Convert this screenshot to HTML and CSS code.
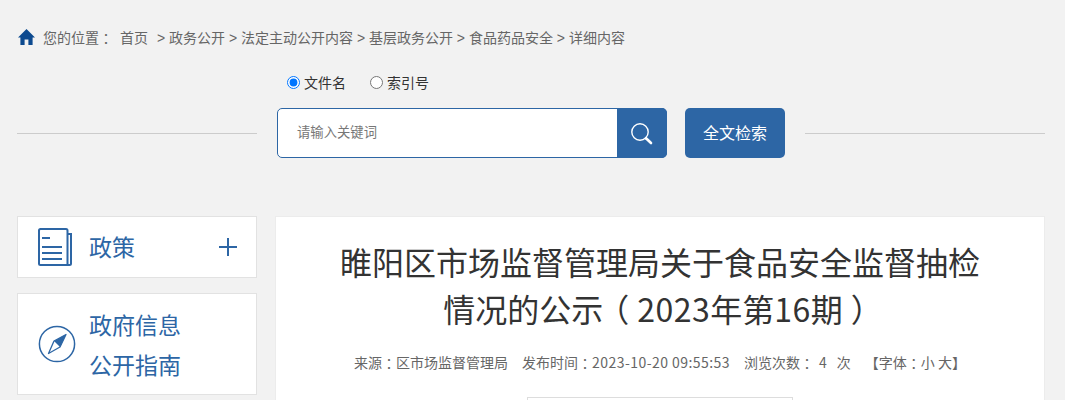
FILE: index.html
```html
<!DOCTYPE html>
<html lang="zh-CN">
<head>
<meta charset="utf-8">
<title>详细内容</title>
<link rel="stylesheet" href="styles.css">
</head>
<body>
<div class="page">
  <nav class="crumb">
    <svg class="home" viewBox="0 0 17 16" width="17" height="16"><path d="M8.5 0 L17 8.4 L14.6 8.4 L14.6 16 L10.4 16 L10.4 10.6 L6.6 10.6 L6.6 16 L2.4 16 L2.4 8.4 L0 8.4 Z" fill="#0d4a8f"/></svg>
    <span class="where">您的位置<span class="pun">：</span></span>
    <span class="first">首页</span>
    <span class="trail">&gt; 政务公开 &gt; 法定主动公开内容 &gt; 基层政务公开 &gt; 食品药品安全 &gt; 详细内容</span>
  </nav>
  <div class="radios">
    <label class="radio"><input type="radio" name="k" checked>文件名</label>
    <label class="radio"><input type="radio" name="k">索引号</label>
  </div>
  <div class="search">
    <div class="rule"></div>
    <div class="field">
      <span class="placeholder">请输入关键词</span>
      <button class="go" aria-label="搜索">
        <svg viewBox="0 0 22 22" width="22" height="22" fill="none" stroke="#fff"><circle cx="9" cy="9" r="8.2" stroke-width="1.4"/><path d="M15 15.2 L20 20" stroke-width="2.6" stroke-linecap="round"/></svg>
      </button>
    </div>
    <button class="full">全文检索</button>
    <div class="rule"></div>
  </div>
  <div class="columns">
    <aside class="side">
      <div class="card policy">
        <svg class="doc" viewBox="0 0 34 38" width="34" height="38" fill="none" stroke="#2d66a5" stroke-width="2"><path d="M2.5 1 H28 Q29.500 1 29.500 2.500 V37 H2.500 Q1 37 1 35.500 V2.500 Q1 1 2.500 1 Z"/><path d="M29.500 6 H33 V35.500 Q33 37 31.500 37 H29.500"/><path d="M4 10 H12 M4 19 H24 M4 25 H24 M4 31 H24"/></svg>
        <span class="label">政策</span>
        <svg class="plus" viewBox="0 0 18 18" width="18" height="18" stroke="#2d66a5" stroke-width="2"><path d="M0 9 H18 M9 0 V18"/></svg>
      </div>
      <div class="card guide">
        <svg class="compass" viewBox="0 0 38 38" width="38" height="38"><circle cx="19" cy="19" r="17.6" fill="none" stroke="#2d66a5" stroke-width="1.5"/><path d="M28 9.500 L22 22 L16 16 Z" fill="#2d66a5"/><path d="M28 9.500 L22 22 L10.500 28.500 L16 16 Z" fill="none" stroke="#2d66a5" stroke-width="1.300" stroke-linejoin="round"/></svg>
        <span class="label two">政府信息<br>公开指南</span>
      </div>
    </aside>
    <main class="article">
      <h1 class="title">睢阳区市场监督管理局关于食品安全监督抽检<br>情况的公示<span class="pun">（</span><span class="digits">2023</span>年第<span class="digits">16</span>期<span class="pun">）</span></h1>
      <p class="meta">
        <span>来源<span class="pun">：</span>区市场监督管理局</span>
        <span>发布时间<span class="pun">：</span><span class="num">2023-10-20 09:55:53</span></span>
        <span>浏览次数<span class="pun">：</span><span class="count">4</span>次</span>
        <span>【字体<span class="pun">：</span>小 大】</span>
      </p>
      <div class="box"></div>
    </main>
  </div>
</div>
</body>
</html>
```
FILE: styles.css
```css
* { box-sizing: border-box; }
html, body { margin: 0; height: 400px; overflow: hidden; }
body {
  background: #f2f2f2;
  font-family: "Noto Sans CJK SC", "Open Sans", sans-serif;
  color: #333;
}
.page { width: 1028px; margin-left: 17px; height: 400px; overflow: hidden; }
.pun {
  display: inline-block;
  width: 1em;
  text-align: center;
  font-feature-settings: "palt";
}

.crumb {
  display: flex;
  align-items: center;
  height: 20px;
  margin-top: 28px;
  margin-left: 1px;
  font-size: 14px;
  line-height: 20px;
  color: #666;
  font-family: "Liberation Sans", "Noto Sans CJK SC", sans-serif;
}
.home { margin-right: 8px; margin-top: -2px; }
.where { margin-right: 7px; }
.first { margin-right: 9px; }

.radios {
  display: flex;
  gap: 24px;
  margin: 24px 0 0 270px;
  height: 20px;
  align-items: center;
  font-size: 14px;
  color: #333;
}
.radio { display: flex; align-items: center; }
.radio input { margin: 0 4px 0 0; width: 13px; height: 13px; }

.search {
  display: flex;
  align-items: center;
  gap: 20px;
  margin-top: 16px;
  height: 50px;
}
.rule { flex: 1; height: 1px; background: #ccc; }
.field {
  width: 390px;
  height: 50px;
  display: flex;
  align-items: center;
  justify-content: space-between;
  background: #fff;
  border: 1px solid #2d66a5;
  border-radius: 5px;
  margin-right: -2px;
}
.placeholder { margin: -3px 0 0 19px; font-size: 13.33px; color: #777; }
.go {
  width: 50px;
  height: 50px;
  margin: -1px;
  padding: 0;
  padding-top: 1px;
  border: 0;
  background: #2d66a5;
  border-radius: 0 5px 5px 0;
  display: flex;
  align-items: center;
  justify-content: center;
}
.full {
  width: 100px;
  height: 50px;
  padding: 0 0 2px;
  border: 0;
  border-radius: 5px;
  background: #2d66a5;
  color: #fff;
  font: 16px "Noto Sans CJK SC", sans-serif;
}

.columns {
  display: flex;
  justify-content: space-between;
  align-items: flex-start;
  margin-top: 58px;
}
.side { width: 240px; display: flex; flex-direction: column; gap: 15px; }
.card {
  display: flex;
  align-items: center;
  background: #fff;
  border: 1px solid #e2e2e2;
  padding-left: 20px;
}
.policy { height: 62px; }
.guide { height: 102px; padding-left: 20px; }
.label { font-size: 23px; line-height: 30px; color: #2d66a5; margin: -3px 0 0 17px; }
.guide .label { margin: 0 0 0 13px; }
.two { line-height: 40px; }
.doc { flex: none; }
.plus { margin-left: auto; margin-right: 19px; }

.article {
  width: 770px;
  height: 300px;
  background: #fff;
  border: 1px solid #ececec;
  text-align: center;
}
.title {
  margin: 21px 0 0;
  font-size: 32px;
  font-weight: 400;
  line-height: 47px;
  color: #333;
}
.title .pun { width: 34px; }
.digits { letter-spacing: .5px; }
.meta {
  margin: 20px 0 0;
  display: flex;
  justify-content: center;
  gap: 14px;
  font-size: 14px;
  line-height: 20px;
  color: #666;
}
.num { letter-spacing: .45px; }
.count { margin: 0 10px 0 5px; }
.box {
  width: 266px;
  height: 60px;
  margin: 25px 0 0 251px;
  background: #fff;
  border: 1px solid #ddd;
}
```
